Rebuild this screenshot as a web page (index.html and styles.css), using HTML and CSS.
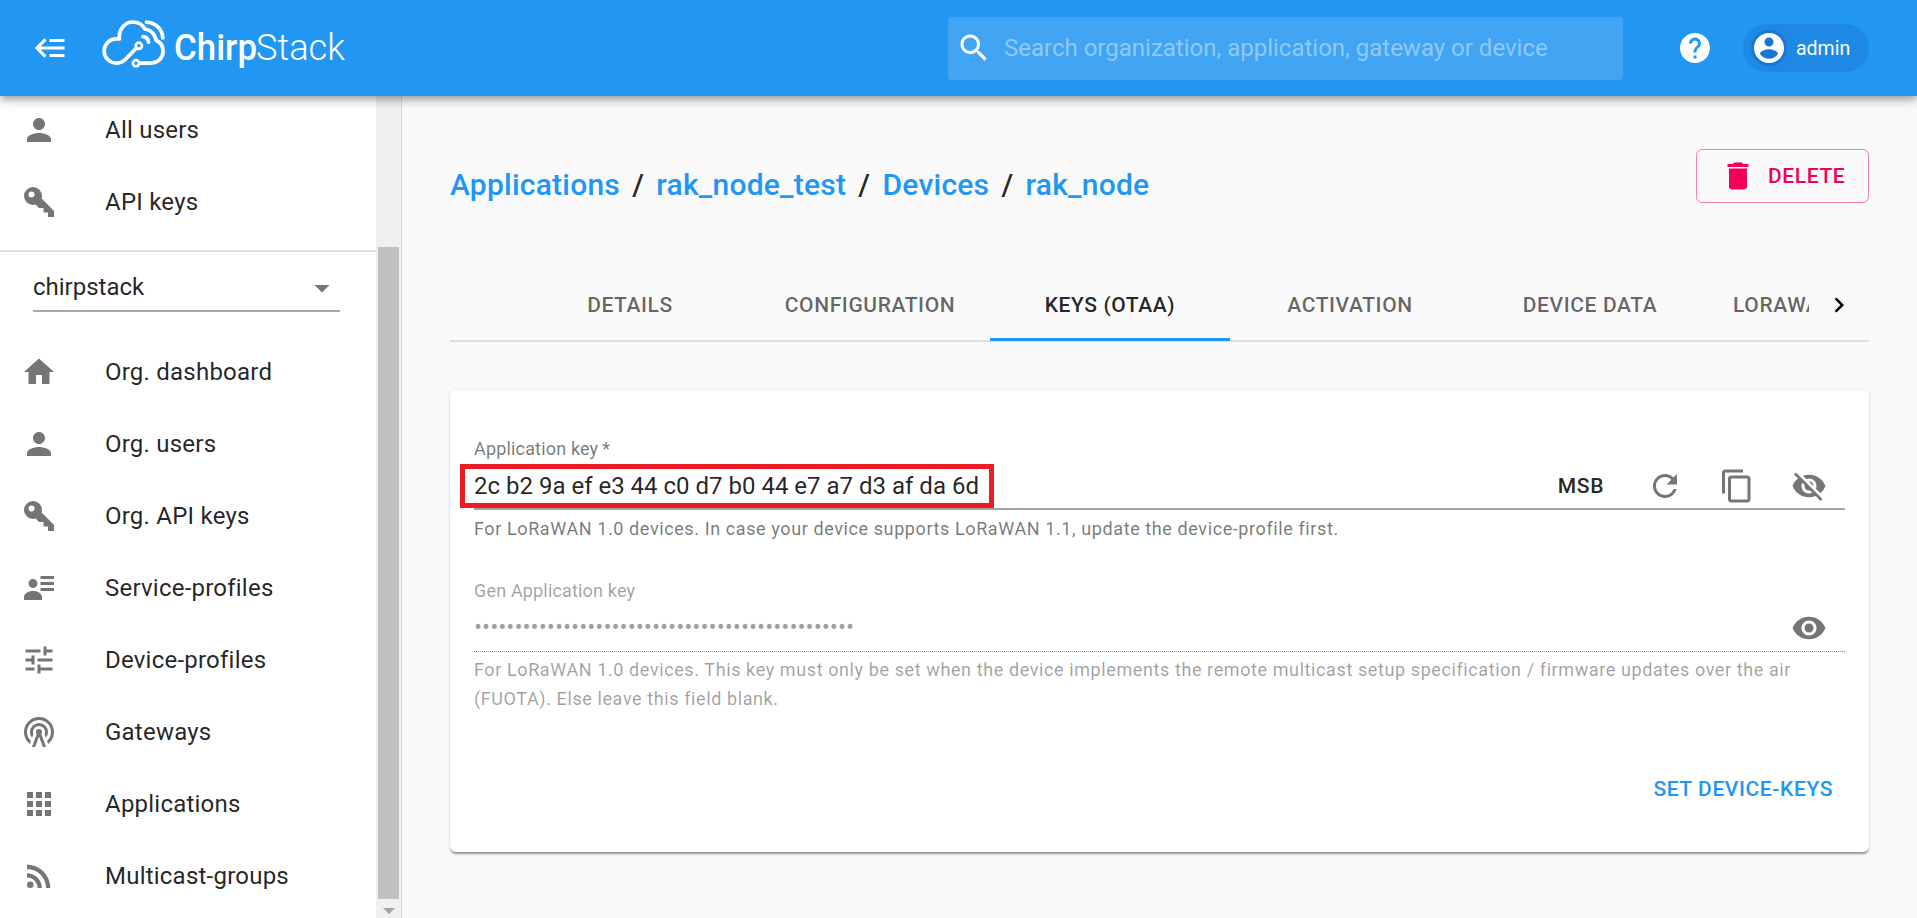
FILE: index.html
```html
<!DOCTYPE html>
<html lang="en">
<head>
<meta charset="utf-8">
<title>ChirpStack</title>
<link rel="stylesheet" href="styles.css">
</head>
<body>
<header class="appbar">
  <svg class="icon menu-toggle" viewBox="0 0 24 24"><path d="M5,13L9,17L7.6,18.42L1.18,12L7.6,5.58L9,7L5,11H21V13H5M21,6V8H11V6H21M21,16V18H11V16H21Z"/></svg>
  <svg class="logo" width="250" height="60" viewBox="98 14 250 60">
    <g fill="none" stroke="#fff" stroke-width="3.7" stroke-linecap="round" stroke-linejoin="round">
      <path d="M136.2 48.2L125.500 59.200C122.500 62.300 119.500 63.100 116.200 63.100A12.100 12.100 0 0 1 116.200 38.900L119.300 38.900C118.400 30 124.500 22 133 22C138.500 22 142.500 24.600 145 29C150.500 29.800 155.300 34 156 40.200C160.500 42.300 163.100 46.300 163.100 51C163.100 57.700 158 63.100 151.500 63.100L140 63.100"/>
      <path d="M146.500 22.100C155.500 22.500 162.300 29.200 162.900 38"/>
      <path d="M143 36.700C146.300 37 148.200 39 148.600 42.200"/>
      <circle cx="138.800" cy="45.800" r="3.100" stroke-width="2.700"/>
      <circle cx="136" cy="63.300" r="3.100" stroke-width="2.700"/>
    </g>
    <text class="logo-bold" x="174" y="59.500" textLength="83" lengthAdjust="spacingAndGlyphs">Chirp</text>
    <text class="logo-light" x="256" y="59.500" textLength="89" lengthAdjust="spacingAndGlyphs">Stack</text>
  </svg>
  <div class="search">
    <svg class="icon" viewBox="0 0 24 24"><path d="M15.5 14h-.79l-.28-.27C15.410 12.590 16 11.110 16 9.500 16 5.910 13.090 3 9.500 3S3 5.910 3 9.500 5.910 16 9.500 16c1.610 0 3.090-.59 4.230-1.570l.27.28v.79l5 4.990L20.490 19l-4.990-5zm-6 0C7.010 14 5 11.990 5 9.500S7.010 5 9.500 5 14 7.010 14 9.500 11.990 14 9.500 14z"/></svg>
    <span class="placeholder">Search organization, application, gateway or device</span>
  </div>
  <svg class="icon help" viewBox="0 0 24 24"><path d="M12 2C6.480 2 2 6.480 2 12s4.480 10 10 10 10-4.480 10-10S17.520 2 12 2zm1 17h-2v-2h2v2zm2.070-7.750l-.9.920C13.450 12.900 13 13.500 13 15h-2v-.5c0-1.100.45-2.100 1.170-2.830l1.240-1.260c.37-.36.59-.86.59-1.410 0-1.100-.9-2-2-2s-2 .9-2 2H8c0-2.210 1.790-4 4-4s4 1.790 4 4c0 .88-.36 1.680-.93 2.250z"/></svg>
  <div class="chip">
    <span class="avatar"><svg class="icon" viewBox="0 0 24 24"><path d="M12 2C6.480 2 2 6.480 2 12s4.480 10 10 10 10-4.480 10-10S17.520 2 12 2zm0 3c1.660 0 3 1.340 3 3s-1.340 3-3 3-3-1.340-3-3 1.340-3 3-3zm0 14.200c-2.500 0-4.710-1.280-6-3.220.03-1.990 4-3.080 6-3.080 1.990 0 5.970 1.090 6 3.080-1.290 1.940-3.500 3.220-6 3.220z"/></svg></span>
    <span>admin</span>
  </div>
</header>

<div class="layout">
  <aside class="sidebar">
    <nav class="nav">
      <a class="nav-item"><svg class="icon" viewBox="0 0 24 24"><path d="M12 12c2.210 0 4-1.790 4-4s-1.790-4-4-4-4 1.790-4 4 1.790 4 4 4zm0 2c-2.670 0-8 1.340-8 4v2h16v-2c0-2.660-5.330-4-8-4z"/></svg><span>All users</span></a>
      <a class="nav-item"><svg class="icon" viewBox="0 0 24 24"><path d="M22,18V22H18V19H15V16H12L9.740,13.740C9.190,13.910 8.610,14 8,14A6,6 0 0,1 2,8A6,6 0 0,1 8,2A6,6 0 0,1 14,8C14,8.610 13.910,9.190 13.740,9.740L22,18M7,5A2,2 0 0,0 5,7A2,2 0 0,0 7,9A2,2 0 0,0 9,7A2,2 0 0,0 7,5Z"/></svg><span>API keys</span></a>
      <div class="divider"></div>
      <div class="org-select"><span>chirpstack</span><svg class="icon" viewBox="0 0 24 24"><path d="M7 10l5 5 5-5z"/></svg></div>
      <a class="nav-item"><svg class="icon" viewBox="0 0 24 24"><path d="M10 20v-6h4v6h5v-8h3L12 3 2 12h3v8z"/></svg><span>Org. dashboard</span></a>
      <a class="nav-item"><svg class="icon" viewBox="0 0 24 24"><path d="M12 12c2.210 0 4-1.790 4-4s-1.790-4-4-4-4 1.790-4 4 1.790 4 4 4zm0 2c-2.670 0-8 1.340-8 4v2h16v-2c0-2.660-5.330-4-8-4z"/></svg><span>Org. users</span></a>
      <a class="nav-item"><svg class="icon" viewBox="0 0 24 24"><path d="M22,18V22H18V19H15V16H12L9.740,13.740C9.190,13.910 8.610,14 8,14A6,6 0 0,1 2,8A6,6 0 0,1 8,2A6,6 0 0,1 14,8C14,8.610 13.910,9.190 13.740,9.740L22,18M7,5A2,2 0 0,0 5,7A2,2 0 0,0 7,9A2,2 0 0,0 9,7A2,2 0 0,0 7,5Z"/></svg><span>Org. API keys</span></a>
      <a class="nav-item"><svg class="icon" viewBox="0 0 24 24"><path d="M11 9C11 10.660 9.660 12 8 12C6.340 12 5 10.660 5 9C5 7.340 6.340 6 8 6C9.660 6 11 7.340 11 9M14 20H2V18C2 15.790 4.690 14 8 14C11.310 14 14 15.790 14 18M22 12V14H13V12M22 8V10H13V8M22 4V6H13V4Z"/></svg><span>Service-profiles</span></a>
      <a class="nav-item"><svg class="icon" viewBox="0 0 24 24"><path d="M3 17v2h6v-2H3zM3 5v2h10V5H3zm10 16v-2h8v-2h-8v-2h-2v6h2zM7 9v2H3v2h4v2h2V9H7zm14 4v-2H11v2h10zm-6-4h2V7h4V5h-4V3h-2v6z"/></svg><span>Device-profiles</span></a>
      <a class="nav-item"><svg class="icon" viewBox="0 0 24 24"><path d="M12,10A2,2 0 0,1 14,12C14,12.500 13.820,12.940 13.530,13.290L16.700,22H14.570L12,14.930L9.430,22H7.300L10.470,13.290C10.180,12.940 10,12.500 10,12A2,2 0 0,1 12,10M12,8A4,4 0 0,0 8,12C8,12.500 8.100,13 8.280,13.460L7.400,15.860C6.530,14.810 6,13.470 6,12A6,6 0 0,1 12,6A6,6 0 0,1 18,12C18,13.470 17.470,14.810 16.600,15.860L15.720,13.460C15.900,13 16,12.500 16,12A4,4 0 0,0 12,8M12,4A8,8 0 0,0 4,12C4,14.360 5,16.500 6.640,17.940L5.920,19.940C3.540,18.110 2,15.230 2,12A10,10 0 0,1 12,2A10,10 0 0,1 22,12C22,15.230 20.460,18.110 18.080,19.940L17.360,17.940C19,16.500 20,14.360 20,12A8,8 0 0,0 12,4Z"/></svg><span>Gateways</span></a>
      <a class="nav-item"><svg class="icon" viewBox="0 0 24 24"><path d="M4 8h4V4H4v4zm6 12h4v-4h-4v4zm-6 0h4v-4H4v4zm0-6h4v-4H4v4zm6 0h4v-4h-4v4zm6-10v4h4V4h-4zm-6 4h4V4h-4v4zm6 6h4v-4h-4v4zm0 6h4v-4h-4v4z"/></svg><span>Applications</span></a>
      <a class="nav-item"><svg class="icon" viewBox="0 0 24 24"><circle cx="6.180" cy="17.820" r="2.180"/><path d="M4 4.440v2.830c7.030 0 12.730 5.700 12.730 12.730h2.830c0-8.590-6.970-15.560-15.560-15.560zm0 5.660v2.830c3.900 0 7.070 3.170 7.070 7.070h2.830c0-5.470-4.430-9.900-9.900-9.900z"/></svg><span>Multicast-groups</span></a>
    </nav>
    <div class="scrollbar">
      <div class="thumb"></div>
      <div class="arrow"></div>
    </div>
  </aside>

  <main class="main">
    <div class="titlebar">
      <h1 class="crumbs"><a>Applications</a><span class="sep">/</span><a>rak_node_test</a><span class="sep">/</span><a>Devices</a><span class="sep">/</span><a>rak_node</a></h1>
      <button class="delete"><svg class="icon" viewBox="0 0 24 24"><path d="M6 19c0 1.100.9 2 2 2h8c1.100 0 2-.9 2-2V7H6v12zM19 4h-3.500l-1-1h-5l-1 1H5v2h14V4z"/></svg><span>DELETE</span></button>
    </div>
    <div class="tabs">
      <div class="tab-scroller">
        <div class="tab">DETAILS</div>
        <div class="tab">CONFIGURATION</div>
        <div class="tab active">KEYS (OTAA)</div>
        <div class="tab">ACTIVATION</div>
        <div class="tab">DEVICE DATA</div>
        <div class="tab">LORAWAN FRAMES</div>
      </div>
      <div class="tab-next"><svg class="chevron" viewBox="0 0 24 24"><path d="M10 6L8.590 7.410 13.170 12l-4.580 4.590L10 18l6-6z"/></svg></div>
    </div>
    <section class="card">
      <div class="field">
        <div class="label">Application key&thinsp;*</div>
        <div class="input">
          <span class="value">2c b2 9a ef e3 44 c0 d7 b0 44 e7 a7 d3 af da 6d</span>
          <span class="msb">MSB</span>
          <svg class="icon" viewBox="0 0 24 24"><path d="M17.650 6.350C16.200 4.900 14.210 4 12 4c-4.420 0-7.990 3.580-7.990 8s3.570 8 7.990 8c3.730 0 6.840-2.550 7.730-6h-2.080c-.82 2.330-3.040 4-5.650 4-3.310 0-6-2.690-6-6s2.690-6 6-6c1.660 0 3.140.69 4.220 1.780L13 11h7V4l-2.350 2.350z"/></svg>
          <svg class="icon" viewBox="0 0 24 24"><path d="M16 1H4c-1.100 0-2 .9-2 2v14h2V3h12V1zm3 4H8c-1.100 0-2 .9-2 2v14c0 1.100.9 2 2 2h11c1.100 0 2-.9 2-2V7c0-1.100-.9-2-2-2zm0 16H8V7h11v14z"/></svg>
          <svg class="icon" viewBox="0 0 24 24"><path d="M12 7c2.760 0 5 2.240 5 5 0 .65-.13 1.260-.36 1.830l2.920 2.920c1.510-1.260 2.700-2.890 3.430-4.750-1.730-4.390-6-7.500-11-7.500-1.400 0-2.740.25-3.980.7l2.160 2.160C10.740 7.130 11.350 7 12 7zM2 4.270l2.280 2.280.46.46C3.080 8.300 1.780 10.020 1 12c1.730 4.390 6 7.500 11 7.500 1.550 0 3.030-.3 4.380-.84l.42.42L19.730 22 21 20.730 3.270 3 2 4.270zM7.530 9.800l1.550 1.550c-.05.21-.08.43-.08.65 0 1.660 1.340 3 3 3 .22 0 .44-.03.65-.08l1.550 1.550c-.67.33-1.410.53-2.200.53-2.760 0-5-2.240-5-5 0-.79.2-1.530.53-2.200zm4.310-.78l3.150 3.150.02-.16c0-1.660-1.340-3-3-3l-.17.01z"/></svg>
          <div class="highlight"></div>
        </div>
        <p class="helper">For LoRaWAN 1.0 devices. In case your device supports LoRaWAN 1.1, update the device-profile first.</p>
      </div>
      <div class="field disabled">
        <div class="label">Gen Application key</div>
        <div class="input">
          <span class="value dots">•••••••••••••••••••••••••••••••••••••••••••••••</span>
          <svg class="icon" viewBox="0 0 24 24"><path d="M12 4.500C7 4.500 2.730 7.610 1 12c1.730 4.390 6 7.500 11 7.500s9.270-3.110 11-7.500c-1.730-4.390-6-7.500-11-7.500zM12 17c-2.760 0-5-2.240-5-5s2.240-5 5-5 5 2.240 5 5-2.240 5-5 5zm0-8c-1.660 0-3 1.340-3 3s1.340 3 3 3 3-1.340 3-3-1.340-3-3-3z"/></svg>
        </div>
        <p class="helper">For LoRaWAN 1.0 devices. This key must only be set when the device implements the remote multicast setup specification / firmware updates over the air (FUOTA). Else leave this field blank.</p>
      </div>
      <div class="actions"><span class="submit">SET DEVICE-KEYS</span></div>
    </section>
  </main>
</div>
</body>
</html>
```

FILE: styles.css
```css
* { box-sizing: border-box; }

body {
  margin: 0;
  height: 918px;
  overflow: hidden;
  background: #fafafa;
  color: rgba(0, 0, 0, 0.87);
  font-family: Roboto, "Liberation Sans", sans-serif;
  font-size: 24px;
}

.icon {
  display: block;
  flex: none;
  width: 36px;
  height: 36px;
  fill: currentColor;
}

/* Top bar */
.appbar {
  position: relative;
  z-index: 2;
  display: flex;
  align-items: center;
  height: 96px;
  padding: 0 48px 0 33px;
  background: #2196f3;
  color: #fff;
  box-shadow: 0 3px 6px -1.5px rgba(0, 0, 0, 0.2), 0 6px 7.5px rgba(0, 0, 0, 0.14), 0 1.5px 15px rgba(0, 0, 0, 0.12);
}

.logo { display: block; flex: none; margin: -8px 0 0 29px; }
.logo text { fill: #fff; font-size: 37px; }
.logo-bold { font-weight: 500; }
.logo-light { font-weight: 300; }

.search {
  display: flex;
  align-items: center;
  width: 675px;
  height: 63px;
  margin-left: auto;
  padding-left: 8px;
  border-radius: 4px;
  background: rgba(255, 255, 255, 0.15);
}

.placeholder {
  margin-left: 12px;
  color: rgba(255, 255, 255, 0.42);
  white-space: nowrap;
}

.help { margin: 0 30px 0 54px; }

.chip {
  display: flex;
  align-items: center;
  width: 126px;
  height: 48px;
  padding-left: 8px;
  border-radius: 24px;
  background: #1e88e5;
  font-size: 19.5px;
}

.avatar { margin-right: 9px; border-radius: 50%; background: #1976d2; }

/* Side navigation */
.layout { display: flex; height: 822px; }

.sidebar {
  display: flex;
  flex: none;
  width: 402px;
  overflow: hidden;
  background: #fff;
  border-right: 1px solid #dedede;
}

.nav { width: 376px; margin-top: -2px; letter-spacing: 0.225px; }

.nav-item {
  display: flex;
  align-items: center;
  height: 72px;
  padding-left: 21px;
}

.nav-item .icon { margin-right: 48px; color: #757575; }
.divider { height: 2px; margin-top: 12px; background: #e0e0e0; }

.org-select {
  display: flex;
  align-items: center;
  justify-content: space-between;
  height: 48px;
  margin: 12px 36px 24px 33px;
  border-bottom: 2px solid #a8a8a8;
  letter-spacing: 0;
}

.org-select .icon { color: #757575; margin: 1px 0 0; }

.scrollbar {
  display: flex;
  flex-direction: column;
  align-items: center;
  width: 25px;
  padding-top: 151px;
  background: #f0f0f0;
}

.thumb { width: 21px; height: 652px; background: #c1c1c1; }

.arrow {
  margin-top: 9px;
  border: 6px solid transparent;
  border-top-color: #a3a3a3;
  border-bottom: 0;
}

/* Content */
.main { flex: 1; padding: 48px 48px 0; }

.titlebar { display: flex; justify-content: space-between; height: 125px; padding-top: 5px; }

.crumbs {
  margin: 12px 0 0;
  font-size: 30px;
  font-weight: 500;
  line-height: 48px;
  letter-spacing: 0.225px;
}

.crumbs a { color: #2196f3; }
.sep { margin: 0 12.2px; }

.delete {
  display: flex;
  align-items: center;
  width: 173px;
  height: 54px;
  padding: 0 0 0 23px;
  border: 1px solid rgba(245, 0, 87, 0.5);
  border-radius: 6px;
  background: none;
  color: #f50057;
  font: 500 21px Roboto, "Liberation Sans", sans-serif;
  letter-spacing: 0.6px;
}

.delete span { margin-left: 12px; }

.tabs {
  display: flex;
  height: 73px;
  padding-left: 60px;
  border-bottom: 2px solid #dedede;
}

.tab-scroller { display: flex; width: 1299px; height: 72px; overflow: hidden; }

.tab {
  display: flex;
  flex: none;
  align-items: center;
  justify-content: center;
  width: 240px;
  padding-top: 3px;
  border-bottom: 3px solid transparent;
  color: rgba(0, 0, 0, 0.6);
  font-size: 21px;
  font-weight: 500;
  letter-spacing: 0.6px;
  white-space: nowrap;
}

.tab.active { border-color: #2196f3; color: rgba(0, 0, 0, 0.87); }

.tab-next { display: flex; align-items: center; justify-content: center; width: 60px; }
.chevron { width: 30px; height: 30px; }

.card {
  height: 462px;
  margin-top: 48px;
  padding: 44px 24px 0;
  border-radius: 6px;
  background: #fff;
  box-shadow: 0 3px 1.5px -1.5px rgba(0, 0, 0, 0.2), 0 1.5px 1.5px rgba(0, 0, 0, 0.14), 0 1.5px 4.5px rgba(0, 0, 0, 0.12);
}

.label { height: 30px; color: rgba(0, 0, 0, 0.54); font-size: 18px; line-height: 30px; letter-spacing: 0.17px; }

.input {
  position: relative;
  display: flex;
  align-items: center;
  gap: 36px;
  height: 46px;
  padding: 0 18px 0 0;
  border-bottom: 2px solid #a3a3a3;
}

.input .icon { color: #757575; }
.value { margin-right: auto; white-space: nowrap; }
.msb { margin-right: 7px; font-size: 21px; font-weight: 500; letter-spacing: 0.6px; }

.highlight {
  position: absolute;
  left: -14px;
  top: 0;
  width: 534px;
  height: 44px;
  border: 5px solid #ed1c24;
}

.helper {
  margin: 4px 0 0;
  color: rgba(0, 0, 0, 0.54);
  font-size: 18px;
  line-height: 29.5px;
  letter-spacing: 0.6px;
}

.disabled { margin-top: 32px; }
.disabled .label, .disabled .helper, .disabled .value { color: rgba(0, 0, 0, 0.38); }
.disabled .input { border-bottom: 1px dotted #8c8c8c; }
.disabled .helper { margin-top: 3px; }
.dots { padding-bottom: 2px; letter-spacing: -0.01px; }

.actions { display: flex; justify-content: flex-end; margin-top: 60px; padding-right: 12px; }
.submit { color: #2196f3; font-size: 21px; font-weight: 500; line-height: 30px; letter-spacing: 0.6px; }
```
